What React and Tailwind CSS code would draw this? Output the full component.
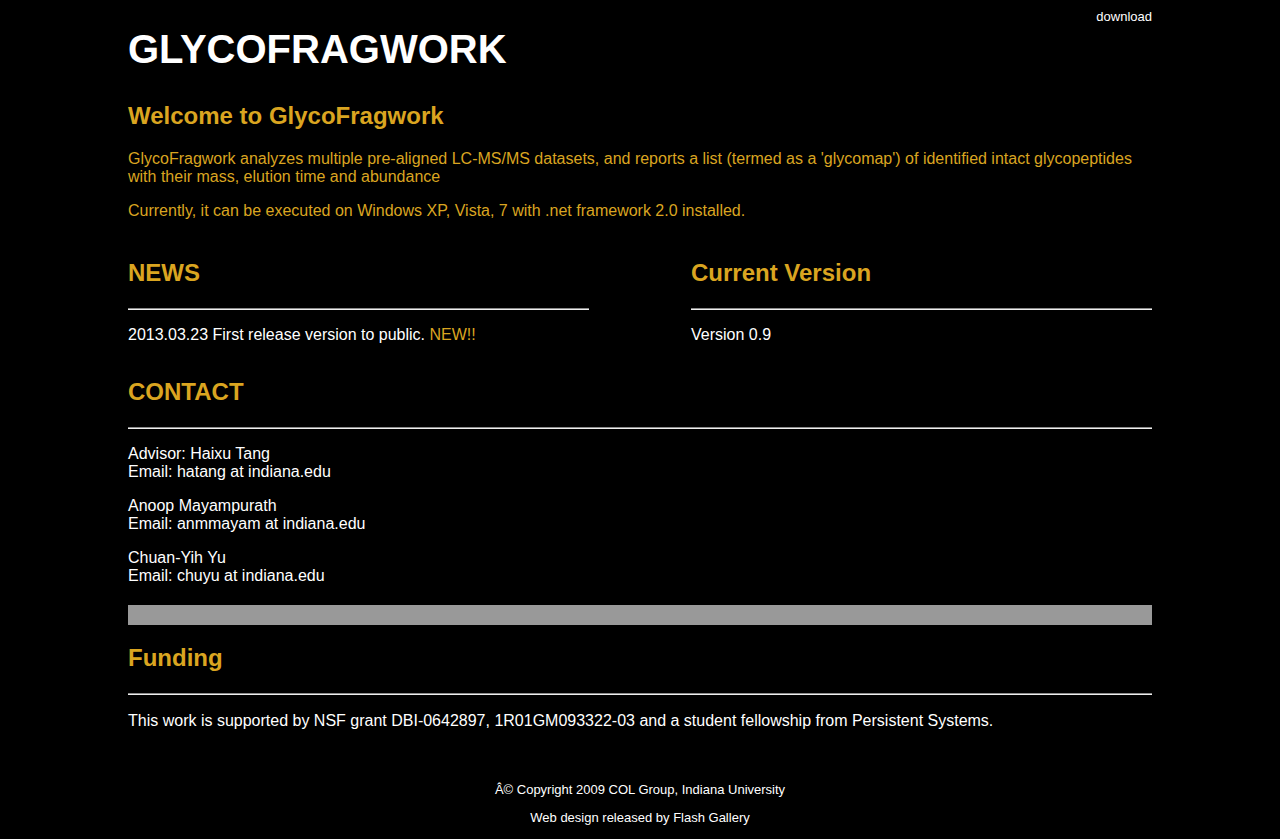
import React from 'react';

const font = { fontFamily: '"Liberation Sans", Arial, Helvetica, sans-serif' };

// section heading + rule, reused across the page
const Heading = ({ children, className = '' }) => (
  <div className={className}>
    <h2 className="text-[24px] leading-[28px] font-bold text-[#daa520]">{children}</h2>
    <div className="mt-[21px] h-0 border-t border-b border-t-[#8a8a8a] border-b-[#eeeeee]"></div>
  </div>
);

const contacts = [
  { name: 'Advisor: Haixu Tang', email: 'Email: hatang at indiana.edu' },
  { name: 'Anoop Mayampurath', email: 'Email: anmmayam at indiana.edu' },
  { name: 'Chuan-Yih Yu', email: 'Email: chuyu at indiana.edu' },
];

const App = () => {
  return (
    <div className="min-h-[839px] bg-black text-white" style={font}>
      <div className="w-[1024px] mx-auto">
        <div className="pt-[10px] text-right text-[13px] leading-[14px]">download</div>
        <h1 className="mt-[2px] text-[40px] leading-[46px] font-bold">GLYCOFRAGWORK</h1>

        <h2 className="mt-[30px] text-[24px] leading-[28px] font-bold text-[#daa520]">Welcome to GlycoFragwork</h2>
        <p className="mt-[20px] text-[16px] leading-[18px] text-[#daa520]">
          GlycoFragwork analyzes multiple pre-aligned LC-MS/MS datasets, and reports a list (termed as a 'glycomap') of identified intact glycopeptides with their mass, elution time and abundance
        </p>
        <p className="mt-[16px] text-[16px] leading-[18px] text-[#daa520]">
          Currently, it can be executed on Windows XP, Vista, 7 with .net framework 2.0 installed.
        </p>

        <div className="mt-[39px] flex justify-between">
          <div className="w-[461px]">
            <Heading>NEWS</Heading>
            <p className="mt-[16px] text-[16px] leading-[18px]">
              2013.03.23 First release version to public. <span className="text-[#daa520]">NEW!!</span>
            </p>
          </div>
          <div className="w-[461px]">
            <Heading>Current Version</Heading>
            <p className="mt-[16px] text-[16px] leading-[18px]">Version 0.9</p>
          </div>
        </div>

        <Heading className="mt-[34px]">CONTACT</Heading>
        <div className="mt-[16px] flex flex-col gap-[16px] text-[16px] leading-[18px]">
          {contacts.map(c => (
            <p key={c.name}>
              {c.name}
              <br />
              {c.email}
            </p>
          ))}
        </div>

        <div className="mt-[20px] h-[20px] bg-[#999999]"></div>

        <Heading className="mt-[19px]">Funding</Heading>
        <p className="mt-[17px] text-[16px] leading-[18px]">
          This work is supported by NSF grant DBI-0642897, 1R01GM093322-03 and a student fellowship from Persistent Systems.
        </p>

        <div className="mt-[53px] pb-[15px] text-center text-[13px] leading-[14px]">
          <p>Â© Copyright 2009 COL Group, Indiana University</p>
          <p className="mt-[14px]">Web design released by Flash Gallery</p>
        </div>
      </div>
    </div>
  );
};

export default App;
